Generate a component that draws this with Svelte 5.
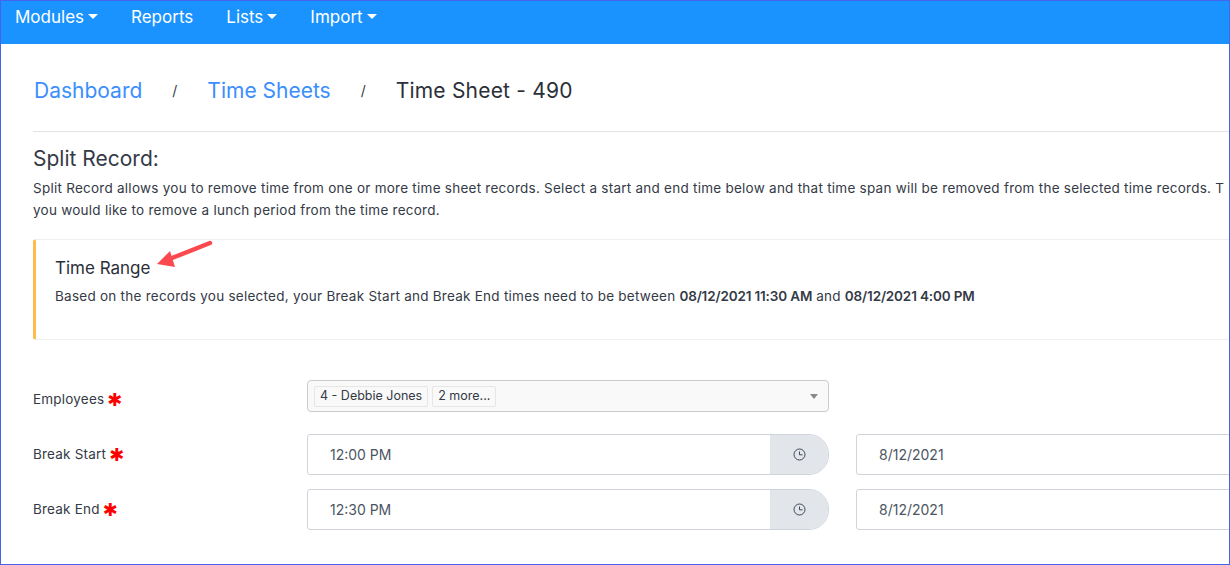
<script>
  const crumbs = ['Dashboard', 'Time Sheets'];
  const nav = [
    { label: 'Modules', caret: true },
    { label: 'Reports', caret: false },
    { label: 'Lists', caret: true },
    { label: 'Import', caret: true }
  ];
  const breaks = [
    { label: 'Break Start', time: '12:00 PM', date: '8/12/2021' },
    { label: 'Break End', time: '12:30 PM', date: '8/12/2021' }
  ];
</script>

<div class="frame">
  <nav class="topbar">
    {#each nav as item}
      <span class="nav-item">{item.label}{#if item.caret}<i class="caret"></i>{/if}</span>
    {/each}
  </nav>

  <main class="content">
    <div class="crumbs">
      {#each crumbs as crumb}
        <a href="#top" class="crumb-link">{crumb}</a>
        <span class="crumb-sep">/</span>
      {/each}
      <span class="crumb-current">Time Sheet - 490</span>
    </div>

    <h2 class="title">Split Record:</h2>
    <p class="desc">Split Record allows you to remove time from one or more time sheet records. Select a start and end time below and that time span will be removed from the selected time records. T<br />you would like to remove a lunch period from the time record.</p>

    <section class="callout">
      <h3>Time Range</h3>
      <p>Based on the records you selected, your Break Start and Break End times need to be between <b>08/12/2021 11:30 AM</b> and <b>08/12/2021 4:00 PM</b></p>
      <svg class="arrow" width="60" height="32" viewBox="0 0 60 32">
        <path d="M54 6 L16 21" stroke="#fb4a4f" stroke-width="4.5" stroke-linecap="round" />
        <path d="M1 27 L14 14 L19 30 Z" fill="#fb4a4f" />
      </svg>
    </section>

    <div class="form-row employees">
      <span class="field-label">Employees <span class="req">✱</span></span>
      <div class="select">
        <span class="tag">4 - Debbie Jones</span>
        <span class="tag">2 more...</span>
        <i class="select-caret"></i>
      </div>
    </div>

    {#each breaks as row}
      <div class="form-row">
        <span class="field-label">{row.label} <span class="req">✱</span></span>
        <div class="time-group">
          <span class="time-value">{row.time}</span>
          <span class="time-addon">
            <svg width="13" height="13" viewBox="0 0 13 13" fill="none" stroke="#3f4754" stroke-width="1">
              <circle cx="6.5" cy="6.5" r="5.5" />
              <path d="M6.5 3.5 V6.8 H9.5" />
            </svg>
          </span>
        </div>
        <div class="date-input">{row.date}</div>
      </div>
    {/each}
  </main>
</div>

<style>
  :global(body) {
    margin: 0;
    background: #fff;
  }
  .frame {
    box-sizing: border-box;
    width: 1230px;
    height: 565px;
    border: 1px solid #4563ee;
    overflow: hidden;
    font-family: Inter, "Open Sans", sans-serif;
    color: #343a46;
    background: #fff;
  }
  .topbar {
    display: flex;
    height: 43px;
    padding: 0 0 0 14px;
    gap: 33px;
    background: #1a93ff;
    color: #fff;
    font-size: 17px;
  }
  .nav-item {
    display: inline-flex;
    align-items: center;
    height: 31px;
  }
  .caret {
    display: inline-block;
    margin-left: 4px;
    border-top: 5px solid #fff;
    border-left: 5px solid transparent;
    border-right: 5px solid transparent;
  }
  .content {
    padding: 0 0 0 32px;
    width: 1300px;
  }
  .crumbs {
    box-sizing: border-box;
    display: flex;
    align-items: center;
    height: 88px;
    padding: 6px 0 0 1px;
    border-bottom: 1px solid #e2e2e2;
    font-size: 21px;
    white-space: nowrap;
  }
  .crumb-link {
    color: #3b8eff;
    text-decoration: none;
  }
  .crumb-sep {
    margin: 0 30px;
    font-size: 14px;
    color: #343a46;
  }
  .crumb-current {
    color: #2b2f38;
    letter-spacing: 0.2px;
  }
  .title {
    margin: 14px 0 0;
    font-size: 21px;
    font-weight: 400;
    line-height: 25px;
  }
  .desc {
    margin: 6px 0 0;
    font-size: 13.5px;
    letter-spacing: 0.25px;
    line-height: 22px;
    white-space: nowrap;
  }
  .callout {
    position: relative;
    box-sizing: border-box;
    height: 101px;
    margin-top: 18px;
    padding: 18px 0 0 19px;
    border: 1px solid #efefef;
    border-left: 3px solid #fdbd4e;
    border-radius: 3px;
  }
  .callout h3 {
    margin: 0;
    font-size: 17px;
    font-weight: 400;
    line-height: 20px;
    color: #2b2f38;
  }
  .callout p {
    margin: 8px 0 0;
    font-size: 13.5px;
    letter-spacing: 0.25px;
    line-height: 20px;
    white-space: nowrap;
  }
  .callout b {
    font-weight: 600;
    letter-spacing: -0.15px;
  }
  .arrow {
    position: absolute;
    left: 120px;
    top: -3px;
  }
  .form-row {
    display: flex;
    align-items: center;
    margin-top: 14px;
    height: 41px;
  }
  .employees {
    margin-top: 40px;
    height: 32px;
    margin-bottom: 22px;
  }
  .employees + .form-row {
    margin-top: 0;
  }
  .field-label {
    width: 274px;
    font-size: 13.5px;
    letter-spacing: 0.2px;
    flex: none;
    padding-bottom: 2px;
  }
  .employees .field-label {
    padding: 6px 0 0;
  }
  .req {
    color: #f00;
    font-family: "DejaVu Sans", sans-serif;
    font-size: 18px;
    line-height: 0;
    vertical-align: -2px;
    margin-left: -1px;
  }
  .select {
    position: relative;
    box-sizing: border-box;
    display: flex;
    align-items: center;
    gap: 4px;
    width: 522px;
    height: 32px;
    padding: 0 6px;
    border: 1px solid #ccc;
    border-radius: 4px;
    background: #f9f9f9;
    font-size: 12.5px;
  }
  .tag {
    padding: 0 5px;
    height: 21px;
    line-height: 18px;
    box-sizing: border-box;
    border: 1px solid #e6e6e6;
    border-radius: 2px;
  }
  .select-caret {
    position: absolute;
    right: 10px;
    top: 13px;
    border-top: 5px solid #888;
    border-left: 4px solid transparent;
    border-right: 4px solid transparent;
  }
  .time-group {
    box-sizing: border-box;
    display: flex;
    width: 522px;
    height: 41px;
    border: 1px solid #ced4da;
    border-radius: 3px 20px 20px 3px;
    overflow: hidden;
    flex: none;
  }
  .time-value {
    flex: 1;
    padding-left: 22px;
    line-height: 40px;
    font-size: 14px;
    color: #4d5563;
  }
  .time-addon {
    width: 58px;
    display: flex;
    align-items: center;
    justify-content: center;
    background: #e2e5ea;
  }
  .date-input {
    box-sizing: border-box;
    flex: none;
    width: 400px;
    height: 41px;
    margin-left: 27px;
    padding-left: 22px;
    border: 1px solid #ced4da;
    border-radius: 3px;
    line-height: 40px;
    font-size: 14px;
    color: #4d5563;
  }
</style>
